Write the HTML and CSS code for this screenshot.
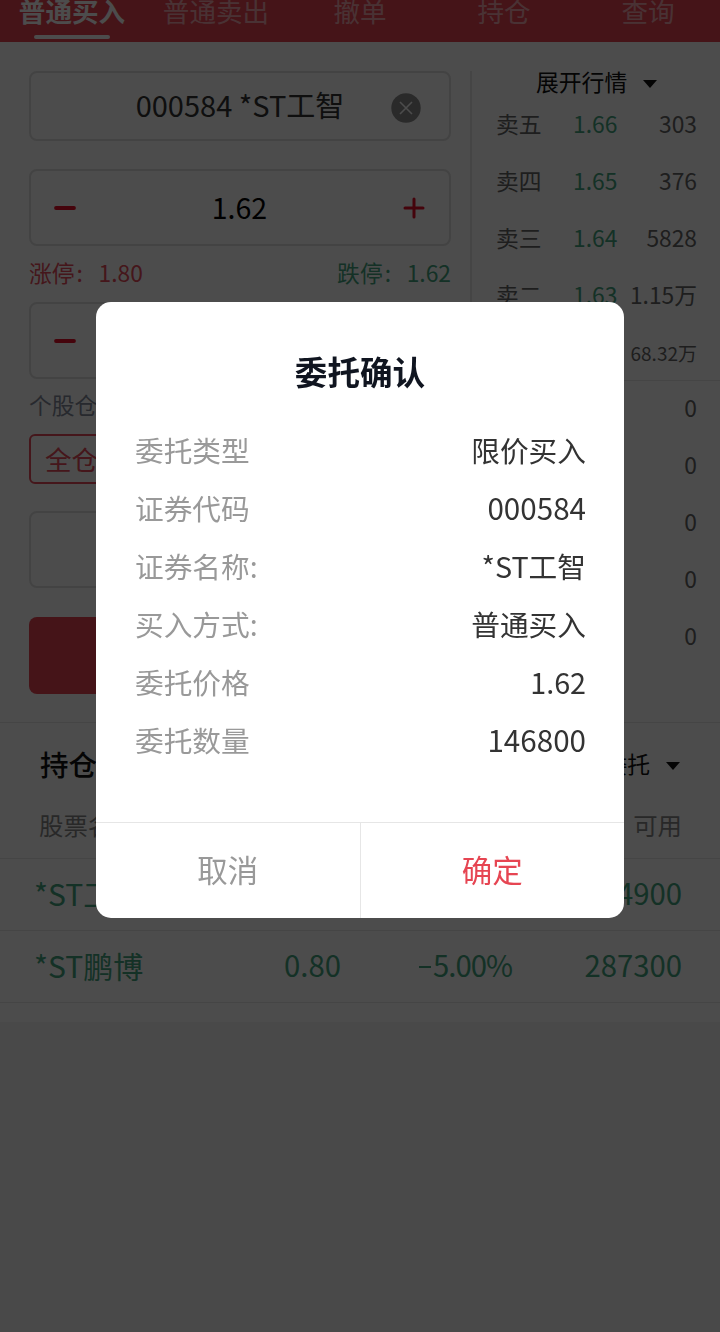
FILE: index.html
```html
<!DOCTYPE html>
<html lang="zh-CN">

<head>
	<meta charset="utf-8" />
	<title>普通买入</title>
	<link rel="stylesheet" href="styles.css">
</head>

<body>
	<nav class="tabs">
		<span class="tab active">普通买入</span>
		<span class="tab">普通卖出</span>
		<span class="tab">撤单</span>
		<span class="tab">持仓</span>
		<span class="tab">查询</span>
	</nav>

	<div class="trade">
		<div class="form">
			<div class="field code">
				<span>000584 *ST工智</span>
				<svg class="clear" viewBox="0 0 30 30">
					<circle cx="15" cy="15" r="14.7" fill="#8c8c8c" />
					<path d="M9 9l12 12M21 9L9 21" stroke="#fff" stroke-width="1.6" />
				</svg>
			</div>
			<div class="field stepper">
				<svg class="sign" viewBox="0 0 22 22"><path d="M2 11h18" /></svg>
				<span>1.62</span>
				<svg class="sign plus" viewBox="0 0 22 22"><path d="M2 11h18M11 2v18" /></svg>
			</div>
			<div class="limits">
				<span class="red">涨停<i>:</i>1.80</span>
				<span class="green">跌停<i>:</i>1.62</span>
			</div>
			<div class="field stepper">
				<svg class="sign" viewBox="0 0 22 22"><path d="M2 11h18" /></svg>
				<svg class="sign plus" viewBox="0 0 22 22"><path d="M2 11h18M11 2v18" /></svg>
			</div>
			<div class="hint">个股仓位</div>
			<div class="ratio">全仓</div>
			<div class="field amount"></div>
			<div class="buy"></div>
		</div>

		<div class="quotes">
			<div class="expand">展开行情<span class="arrow"></span></div>
			<div class="sell">
				<div class="quote"><span>卖五</span><span class="green">1.66</span><span>303</span></div>
				<div class="quote"><span>卖四</span><span class="green">1.65</span><span>376</span></div>
				<div class="quote"><span>卖三</span><span class="green">1.64</span><span>5828</span></div>
				<div class="quote"><span>卖二</span><span class="green">1.63</span><span>1.15万</span></div>
				<div class="quote"><span></span><span></span><span class="small">68.32万</span></div>
			</div>
			<div class="quote"><span></span><span></span><span>0</span></div>
			<div class="quote"><span></span><span></span><span>0</span></div>
			<div class="quote"><span></span><span></span><span>0</span></div>
			<div class="quote"><span></span><span></span><span>0</span></div>
			<div class="quote"><span></span><span></span><span>0</span></div>
		</div>
	</div>

	<div class="holdings">
		<div class="holdings-title">
			<h2>持仓</h2>
			<span>委托</span>
			<span class="arrow"></span>
		</div>
		<div class="row head"><span>股票名称</span><span></span><span></span><span>可用</span></div>
		<div class="row"><span>*ST工智</span><span></span><span></span><span>4900</span></div>
		<div class="row"><span>*ST鹏博</span><span>0.80</span><span class="change"><i class="minus"></i>5.00%</span><span>287300</span></div>
	</div>

	<div class="mask">
		<div class="dialog">
			<h1>委托确认</h1>
			<dl>
				<dt>委托类型</dt><dd>限价买入</dd>
				<dt>证券代码</dt><dd class="num">000584</dd>
				<dt>证券名称:</dt><dd>*ST工智</dd>
				<dt>买入方式:</dt><dd>普通买入</dd>
				<dt>委托价格</dt><dd>1.62</dd>
				<dt>委托数量</dt><dd class="num">146800</dd>
			</dl>
			<div class="actions">
				<button type="button">取消</button>
				<button type="button" class="ok">确定</button>
			</div>
		</div>
	</div>
</body>

</html>
```
FILE: styles.css
```css
* {
	box-sizing: border-box;
}

body {
	margin: 0;
	height: 1332px;
	overflow: hidden;
	background: #f3f3f3;
	color: #333;
	font-family: "Noto Sans CJK SC", sans-serif;
	font-size: 22.8px;
	line-height: 1;
	white-space: nowrap;
}

i {
	font-style: normal;
}

.red {
	color: #e64c5a;
}

.green {
	color: #45a680;
}

.arrow {
	display: inline-block;
	border: 7px solid transparent;
	border-top: 8px solid #111;
	border-bottom: 0;
}

/* Top tabs */
.tabs {
	display: flex;
	height: 42px;
	background: #e64353;
}

.tab {
	position: relative;
	flex: 1;
	height: 41px;
	margin-top: -2px;
	text-align: center;
	font-size: 26.6px;
	color: #f5a9b0;
}

.tab.active {
	color: #fff;
	font-weight: 700;
}

.tab.active::after {
	content: "";
	position: absolute;
	left: 34px;
	bottom: 0;
	width: 76px;
	height: 4px;
	border-radius: 2px;
	background: #fff;
}

/* Order form and price levels */
.trade {
	display: flex;
	height: 681px;
	padding: 29px 23px 0 29px;
	background: #fff;
	border-bottom: 1px solid #e6e6e6;
}

.form {
	width: 422px;
}

.field {
	display: flex;
	align-items: center;
	height: 77px;
	border: 2px solid #e0e0e0;
	border-radius: 8px;
	font-size: 28.5px;
}

.field.code {
	position: relative;
	justify-content: center;
	height: 70px;
	margin-bottom: 28px;
	padding-bottom: 4px;
	font-size: 29px;
}

.clear {
	position: absolute;
	right: 28px;
	top: 20px;
	width: 30px;
	height: 30px;
}

.stepper {
	justify-content: space-between;
	padding: 0 24px 0 23px;
	color: #000;
}

.sign {
	width: 22px;
	height: 22px;
	fill: none;
	stroke: #e60f28;
	stroke-width: 3.8;
	stroke-linecap: round;
}

.sign.plus {
	stroke-width: 3;
}

.limits {
	display: flex;
	justify-content: space-between;
	height: 56px;
	padding-top: 16px;
}

.limits i {
	display: inline-block;
	width: 24px;
	padding-left: 2px;
}

.hint {
	height: 55px;
	padding-top: 15px;
	color: #84899a;
}

.ratio {
	width: 82px;
	height: 50px;
	margin-bottom: 27px;
	padding: 10px 0 0 14px;
	border: 2px solid #e64c5a;
	border-radius: 6px;
	font-size: 26.6px;
	color: #e64c5a;
}

.buy {
	height: 77px;
	margin-top: 29px;
	border-radius: 8px;
	background: #e64353;
}

.quotes {
	flex: 1;
	height: 595px;
	margin-left: 19px;
	border-left: 2px solid #e6e6e6;
}

.expand {
	padding-left: 64px;
	color: #111;
}

.expand .arrow {
	margin-left: 16px;
	vertical-align: 3px;
}

.sell {
	height: 287px;
	margin: 0 -23px -1px 0;
	padding: 2px 23px 0 0;
	border-bottom: 1px solid #e6e6e6;
}

.quote {
	display: grid;
	grid-template-columns: 77px 48px 1fr;
	align-items: center;
	height: 57px;
	padding-left: 24px;
	color: #666;
}

.quote .green {
	color: #45a680;
}

.quote span:last-child {
	justify-self: end;
}

.quote .small {
	font-size: 19px;
}

/* Holdings list */
.holdings {
	height: 299px;
	background: #fff;
}

.holdings-title {
	display: flex;
	align-items: center;
	height: 82px;
	padding: 0 40px;
	color: #111;
}

.holdings-title h2 {
	flex: 1;
	margin: 0;
	font-size: 28.5px;
	font-weight: 500;
}

.holdings-title .arrow {
	margin: 3px 0 0 16px;
}

.row {
	display: grid;
	grid-template-columns: 181px 126px 171px 1fr;
	align-items: center;
	height: 72px;
	padding: 0 38px 4px 34px;
	border-bottom: 1px solid #e6e6e6;
	font-size: 29.3px;
	text-align: right;
	color: #45a680;
}

.row span:first-child {
	text-align: left;
	font-size: 30px;
}

.row.head,
.row.head span:first-child {
	font-size: 24.4px;
	color: #888;
}

.row.head {
	height: 54px;
	padding-left: 39px;
	padding-bottom: 12px;
}

.change {
	letter-spacing: -1px;
}

.minus {
	display: inline-block;
	width: 12px;
	height: 2px;
	margin-right: 2px;
	vertical-align: 9px;
	background: #45a680;
}

/* Confirm dialog */
.mask {
	position: fixed;
	inset: 0;
	padding: 302px 96px 0;
	background: rgba(0, 0, 0, 0.7);
}

.dialog {
	display: flex;
	flex-direction: column;
	height: 616px;
	border-radius: 15px;
	background: #fff;
	overflow: hidden;
}

.dialog h1 {
	margin: 51px 0 32px;
	font-size: 32.6px;
	line-height: 36px;
	text-align: center;
	color: #101520;
}

.dialog dl {
	display: grid;
	grid-template-columns: 1fr auto;
	grid-auto-rows: 58px;
	flex: 1;
	margin: 0;
	padding: 0 38px 0 39px;
	font-size: 28.7px;
	line-height: 58px;
}

.dialog dt {
	color: #999;
}

.dialog dd {
	margin: 0;
	text-align: right;
}

.dialog .num {
	font-size: 29.6px;
}

.actions {
	display: flex;
	height: 96px;
	border-top: 1px solid #e6e6e6;
}

.actions button {
	flex: 1;
	padding: 0 0 4px;
	border: 0;
	background: none;
	font: 30.5px "Noto Sans CJK SC", sans-serif;
	color: #999;
}

.actions .ok {
	border-left: 1px solid #e6e6e6;
	color: #e64552;
}
```
